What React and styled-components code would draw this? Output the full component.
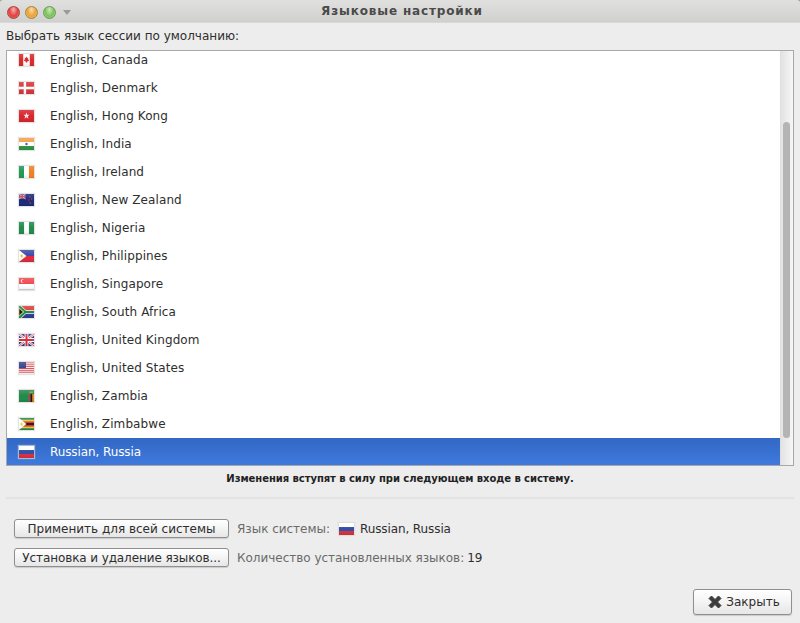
import React from 'react';
import styled, { createGlobalStyle } from 'styled-components';

const GlobalStyle = createGlobalStyle`
  html, body {
    margin: 0;
    padding: 0;
    background: #ededed;
  }
  body {
    font-family: "DejaVu Sans", sans-serif;
    font-size: 12px;
    color: #2e2e2e;
  }
`;

const Window = styled.div`
  width: 800px;
  height: 623px;
  display: flex;
  flex-direction: column;
  overflow: hidden;
  background: #a09a90;
`;

const TitleBar = styled.div`
  height: 23px;
  box-sizing: border-box;
  position: relative;
  display: flex;
  align-items: center;
  justify-content: center;
  padding-left: 4px;
  border-radius: 3px 3px 0 0;
  background: linear-gradient(#e0e0de, #d0d0ce);
  border-bottom: 1px solid #d8d8d8;
  font-weight: bold;
  font-size: 12px;
  letter-spacing: 0.85px;
  color: #4a4a4a;
`;

const Controls = styled.div`
  position: absolute;
  left: 7px;
  top: 6px;
  display: flex;
  align-items: center;
  gap: 5px;
`;

const Dot = styled.span`
  width: 13px;
  height: 13px;
  border-radius: 50%;
  border: 1px solid ${p => p.$edge};
  box-sizing: border-box;
  background: radial-gradient(ellipse at 50% 25%, ${p => p.$light} 0, ${p => p.$color} 55%, ${p => p.$light} 120%);
`;

const MenuArrow = styled.span`
  width: 0;
  height: 0;
  margin-left: 2px;
  border-left: 4px solid transparent;
  border-right: 4px solid transparent;
  border-top: 5px solid #9a9a9a;
`;

const Content = styled.div`
  flex: 1;
  display: flex;
  flex-direction: column;
  padding: 7px 6px 8px;
  background: #ededed;
`;

const Heading = styled.div`
  height: 20px;
  line-height: 13px;
`;

const ListFrame = styled.div`
  height: 414px;
  display: flex;
  border: 1px solid #a8a8a8;
  background: #fff;
  overflow: hidden;
`;

const Rows = styled.div`
  flex: 1;
  margin-top: -5px;
`;

const Row = styled.div`
  height: 28px;
  display: flex;
  align-items: center;
  padding-left: 12px;
  gap: 16px;
  letter-spacing: ${p => (p.$selected ? '-0.1px' : '0.1px')};
  color: ${p => (p.$selected ? '#fff' : '#2e2e2e')};
  background: ${p => (p.$selected ? 'linear-gradient(#3268c4, #3f7ade)' : 'transparent')};
`;

const ScrollTrack = styled.div`
  width: 13px;
  padding: 71px 3px 0 2px;
  box-sizing: border-box;
  background: linear-gradient(90deg, #e3e3e3, #f6f6f6);
  border-left: 1px solid #dedede;
`;

const ScrollThumb = styled.div`
  width: 7px;
  height: 316px;
  border-radius: 4px;
  background: #b4b4b4;
`;

const Notice = styled.div`
  height: 24px;
  padding-bottom: 7px;
  display: flex;
  align-items: center;
  justify-content: center;
  font-size: 10px;
  font-weight: bold;
  letter-spacing: -0.05px;
  color: #222;
`;

const Divider = styled.div`
  height: 2px;
  background: #e3e3e3;
`;

const SystemGrid = styled.div`
  margin-top: 20px;
  padding-left: 8px;
  display: grid;
  grid-template-columns: 215px 1fr;
  column-gap: 8px;
  row-gap: 10px;
  align-items: center;
`;

const Button = styled.button`
  height: 19px;
  padding: 0;
  display: flex;
  align-items: center;
  justify-content: center;
  gap: 4px;
  font-family: inherit;
  font-size: 12px;
  letter-spacing: ${p => p.$tracking || 0}px;
  color: #2e2e2e;
  border: 1px solid #8f8f8f;
  border-radius: 3px;
  background: linear-gradient(#fff, #f4f4f4 50%, #e6e6e6);
  box-shadow: 0 1px 1px rgba(0, 0, 0, 0.15);
`;

const InfoLine = styled.div`
  display: flex;
  align-items: center;
  color: #6a6a6a;
  letter-spacing: -0.02px;
`;

const InfoValue = styled.span`
  display: flex;
  align-items: center;
  gap: 6px;
  margin-left: ${p => p.$gap}px;
  letter-spacing: ${p => p.$tracking || 0}px;
  color: #2e2e2e;
`;

const Footer = styled.div`
  margin-top: auto;
  display: flex;
  justify-content: flex-end;
  padding-right: 2px;
`;

const CloseButton = styled(Button)`
  width: 99px;
  height: 26px;
  padding-left: 3px;
`;

const FlagBox = styled.svg`
  flex: none;
  display: block;
  width: 15px;
  height: 12px;
  box-shadow: 0 0 1px 1px rgba(215, 215, 215, 0.7);
`;

// flag drawings, 16x12 viewBox
const flagArt = {
  ca: <><rect width="16" height="12" fill="#fff" /><rect width="4.500" height="12" fill="#d92c2c" /><rect x="11.500" width="4.500" height="12" fill="#d92c2c" /><path d="M8 2.500l.8 1.500 1.100-.4-.4 2.200 1.200-.4-.3 1.500-1.700.5.2 1.200H7.100l.2-1.200-1.700-.5-.3-1.500 1.200.4-.4-2.200 1.100.4z" fill="#d92c2c" /></>,
  dk: <><rect width="16" height="12" fill="#d8343c" /><rect x="5" width="2.600" height="12" fill="#fff" /><rect y="4.700" width="16" height="2.600" fill="#fff" /></>,
  hk: <><rect width="16" height="12" fill="#d9252c" /><path d="M8 2.400l.9 2.300 2.400.1-1.900 1.500.7 2.400-2.100-1.400-2.100 1.400.7-2.400-1.900-1.500 2.400-.1z" fill="#f9e6e6" /></>,
  in: <><rect width="16" height="4" fill="#f4a04a" /><rect y="4" width="16" height="4" fill="#fff" /><rect y="8" width="16" height="4" fill="#2f9440" /><circle cx="8" cy="6" r="1.300" fill="#4a5fa8" /></>,
  ie: <><rect width="5.400" height="12" fill="#1f9a55" /><rect x="5.400" width="5.200" height="12" fill="#fff" /><rect x="10.600" width="5.400" height="12" fill="#ef8122" /></>,
  nz: <><rect width="16" height="12" fill="#1c2a78" /><rect width="7" height="5" fill="#5a60a0" /><path d="M0 0l7 5M7 0L0 5" stroke="#e8b0b8" strokeWidth="1" /><path d="M3.500 0v5M0 2.500h7" stroke="#d8404c" strokeWidth="1.200" /><circle cx="11.500" cy="3" r=".8" fill="#d83c3c" /><circle cx="13.500" cy="5" r=".8" fill="#d83c3c" /><circle cx="10.500" cy="6" r=".8" fill="#d83c3c" /><circle cx="12" cy="9" r=".8" fill="#d83c3c" /></>,
  ng: <><rect width="16" height="12" fill="#fff" /><rect width="5.400" height="12" fill="#1f8c4c" /><rect x="10.600" width="5.400" height="12" fill="#1f8c4c" /></>,
  ph: <><rect width="16" height="6" fill="#3a4aa8" /><rect y="6" width="16" height="6" fill="#e02a3c" /><path d="M0 0l8 6-8 6z" fill="#fff" /><circle cx="2.800" cy="6" r="1.400" fill="#eec830" /></>,
  sg: <><rect width="16" height="6" fill="#ee4a50" /><rect y="6" width="16" height="6" fill="#fff" /><circle cx="3.600" cy="3" r="1.800" fill="#fff" /><circle cx="4.400" cy="3" r="1.600" fill="#ee4a50" /><rect y="11" width="16" height="1" fill="#d4d4d4" /></>,
  za: <><rect width="16" height="6" fill="#d8403a" /><rect y="6" width="16" height="6" fill="#2a3f92" /><path d="M0 0l7 6-7 6M7 6h9" fill="none" stroke="#fff" strokeWidth="3.400" /><path d="M0 0l7 6-7 6M7 6h9" fill="none" stroke="#1f8a4c" strokeWidth="2.200" /><path d="M0 2.200L4.400 6 0 9.800z" fill="#1a1a1a" stroke="#eec830" strokeWidth=".7" /></>,
  gb: <><rect width="16" height="12" fill="#2c3a88" /><path d="M0 0l16 12M16 0L0 12" stroke="#fff" strokeWidth="2.400" /><path d="M0 0l16 12M16 0L0 12" stroke="#d8404c" strokeWidth=".9" /><path d="M8 0v12M0 6h16" stroke="#fff" strokeWidth="4" /><path d="M8 0v12M0 6h16" stroke="#d8303c" strokeWidth="2.200" /></>,
  us: <><rect width="16" height="12" fill="#fff" /><path d="M0 .9h16M0 2.800h16M0 4.600h16M0 6.500h16M0 8.300h16M0 10.200h16" stroke="#d8404c" strokeWidth=".95" /><rect width="7.500" height="6.200" fill="#3a4490" /></>,
  zm: <><rect width="16" height="12" fill="#1f8a4a" /><rect x="10.400" y="4" width="1.900" height="8" fill="#d8343c" /><rect x="12.300" y="4" width="1.900" height="8" fill="#1a1a1a" /><rect x="14.200" y="4" width="1.800" height="8" fill="#ef8122" /><rect x="11" y="1.600" width="4" height="1.200" fill="#ef8122" /></>,
  zw: <><rect width="16" height="12" fill="#1f8a4a" /><rect y="1.700" width="16" height="8.600" fill="#eecb2e" /><rect y="3.400" width="16" height="5.200" fill="#d8343c" /><rect y="5.100" width="16" height="1.800" fill="#1a1a1a" /><path d="M0 0l8 6-8 6z" fill="#fff" /><path d="M2.800 4l.6 1.400 1.400.1-1.100 1 .4 1.500-1.300-.8-1.300.8.4-1.500-1.100-1 1.400-.1z" fill="#eecb2e" /></>,
  ru: <><rect width="16" height="4" fill="#fff" /><rect y="4" width="16" height="4" fill="#2f4fa8" /><rect y="8" width="16" height="4" fill="#d8303c" /></>,
};

const Flag = ({ code }) => (
  <FlagBox viewBox="0 0 16 12" preserveAspectRatio="none">
    <defs>
      <linearGradient id={`gloss-${code}`} x1="0" y1="0" x2="0" y2="1">
        <stop offset="0" stopColor="#fff" stopOpacity="0.15" />
        <stop offset="0.5" stopColor="#fff" stopOpacity="0" />
        <stop offset="1" stopColor="#000" stopOpacity="0.08" />
      </linearGradient>
    </defs>
    {flagArt[code]}
    <rect width="16" height="12" fill={`url(#gloss-${code})`} />
  </FlagBox>
);

const languages = [
  ['ca', 'English, Canada'],
  ['dk', 'English, Denmark'],
  ['hk', 'English, Hong Kong'],
  ['in', 'English, India'],
  ['ie', 'English, Ireland'],
  ['nz', 'English, New Zealand'],
  ['ng', 'English, Nigeria'],
  ['ph', 'English, Philippines'],
  ['sg', 'English, Singapore'],
  ['za', 'English, South Africa'],
  ['gb', 'English, United Kingdom'],
  ['us', 'English, United States'],
  ['zm', 'English, Zambia'],
  ['zw', 'English, Zimbabwe'],
  ['ru', 'Russian, Russia'],
];

const App = () => (
  <Window>
    <GlobalStyle />
    <TitleBar>
      <Controls>
        <Dot $color="#e2403e" $light="#f8b0ac" $edge="#a84240" />
        <Dot $color="#e9a23a" $light="#fbdca0" $edge="#a8803e" />
        <Dot $color="#7cc05c" $light="#cceab8" $edge="#6c9a54" />
        <MenuArrow />
      </Controls>
      Языковые настройки
    </TitleBar>
    <Content>
      <Heading>Выбрать язык сессии по умолчанию:</Heading>
      <ListFrame>
        <Rows>
          {languages.map(([code, name]) => (
            <Row key={code} $selected={code === 'ru'}>
              <Flag code={code} />
              <span>{name}</span>
            </Row>
          ))}
        </Rows>
        <ScrollTrack>
          <ScrollThumb />
        </ScrollTrack>
      </ListFrame>
      <Notice>Изменения вступят в силу при следующем входе в систему.</Notice>
      <Divider />
      <SystemGrid>
        <Button>Применить для всей системы</Button>
        <InfoLine>
          Язык системы:
          <InfoValue $gap={9} $tracking={-0.1}>
            <Flag code="ru" />
            Russian, Russia
          </InfoValue>
        </InfoLine>
        <Button $tracking={-0.1}>Установка и удаление языков...</Button>
        <InfoLine>
          Количество установленных языков:
          <InfoValue $gap={3}>19</InfoValue>
        </InfoLine>
      </SystemGrid>
      <Footer>
        <CloseButton>
          <svg width="14" height="14" viewBox="0 0 14 14">
            <path d="M1 3.500L3.500 1 7 4.500 10.500 1 13 3.500 9.500 7 13 10.500 10.500 13 7 9.500 3.500 13 1 10.500 4.500 7z" fill="#3c3c3c" stroke="#3c3c3c" strokeWidth="1" strokeLinejoin="round" />
          </svg>
          Закрыть
        </CloseButton>
      </Footer>
    </Content>
  </Window>
);

export default App;
